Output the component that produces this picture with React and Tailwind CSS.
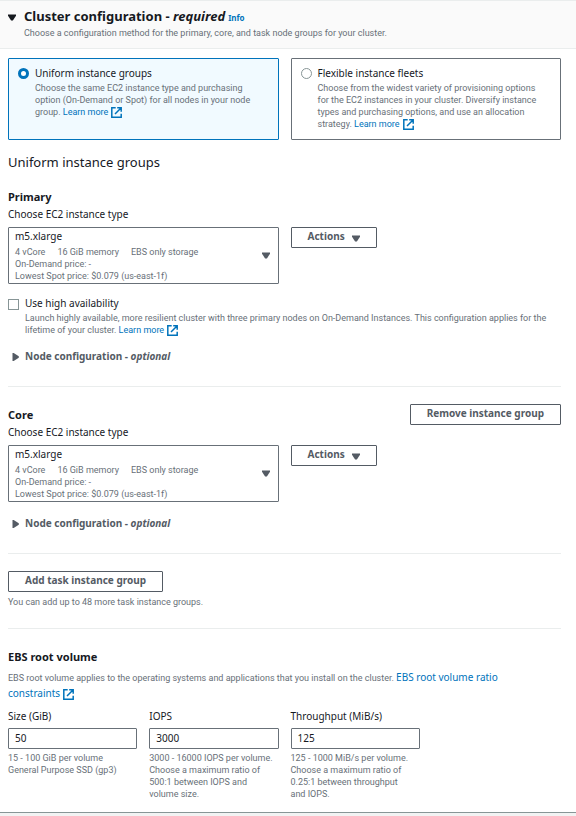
import React, { useState } from "react";

const HELP = "font-[Roboto,sans-serif] text-[9px] leading-[12px] text-[#687078]";
const BODY = "text-[10px] leading-[14px] text-[#16191f]";
const BUTTON =
  "h-[21px] rounded-[1px] border border-[#545b64] bg-white px-4 pb-[2px] text-[10px] leading-[17px] font-bold text-[#545b64]";

function External() {
  return (
    <svg
      viewBox="0 0 11 11"
      className="ml-[3px] inline-block h-[11px] w-[11px] align-[-3px]"
      fill="none"
      stroke="currentColor"
      strokeWidth="1.5"
      aria-hidden="true"
    >
      <path d="M4.7 .8H.8v9.4h9.4V6.8M6.2 .8h4v4M10 1 4 7" />
    </svg>
  );
}

function Down({ className = "" }) {
  return (
    <svg viewBox="0 0 8 7" className={`h-[7px] w-[8px] shrink-0 ${className}`} fill="currentColor" aria-hidden="true">
      <path d="M0 .5h8v1.2L4.9 6.5H3.1L0 1.7z" />
    </svg>
  );
}

function Link({ children }) {
  return (
    <a href="#" className="text-[#0073bb]">
      {children}
      <External />
    </a>
  );
}

function OptionCard({ title, checked, onChange, children }) {
  return (
    <label
      className={`flex min-h-[82px] gap-[6px] rounded-[1px] border pt-[7px] pl-[9px] pr-2 ${
        checked ? "border-[#0073bb] bg-[#f1faff]" : "border-[#687078] bg-white"
      }`}
    >
      <input
        type="radio"
        name="method"
        checked={checked}
        onChange={onChange}
        className="mt-[2px] h-[11px] w-[11px] shrink-0 appearance-none rounded-full border border-[#879596] bg-white checked:border-[3px] checked:border-[#0073bb]"
      />
      <span>
        <span className={`block ${BODY}`}>{title}</span>
        <span className={`mt-[2px] block whitespace-nowrap ${HELP}`}>{children}</span>
      </span>
    </label>
  );
}

function InstanceType({ id }) {
  return (
    <div>
      <label htmlFor={id} className="mt-px block text-[10px] leading-[16px] text-[#16191f]">
        Choose EC2 instance type
      </label>
      <div className="mt-[5px] grid grid-cols-2 items-start gap-3">
        <div className="grid rounded-[1px] border border-[#687078]">
          <select
            id={id}
            className="col-start-1 row-start-1 h-[55px] w-full appearance-none bg-transparent pt-px pb-10 pl-[6px] text-[10px] leading-[14px] text-[#16191f]"
          >
            <option>m5.xlarge</option>
          </select>
          <div className="pointer-events-none col-start-1 row-start-1 flex items-center justify-between pr-2 pl-[6px]">
            <div className={`pt-[18px] pb-px ${HELP}`}>
              <div className="flex gap-3">
                <span>4 vCore</span>
                <span>16 GiB memory</span>
                <span>EBS only storage</span>
              </div>
              <div>On-Demand price: -</div>
              <div>Lowest Spot price: $0.079 (us-east-1f)</div>
            </div>
            <Down className="text-[#545b64]" />
          </div>
        </div>
        <div>
          <button type="button" className={`flex items-center gap-[7px] ${BUTTON}`}>
            Actions
            <Down className="mt-1" />
          </button>
        </div>
      </div>
    </div>
  );
}

function NodeConfiguration({ className }) {
  return (
    <button
      type="button"
      aria-expanded="false"
      className={`flex items-center gap-[6px] pl-1 text-[10px] leading-[14px] font-bold text-[#545b64] ${className}`}
    >
      <svg viewBox="0 0 7 8" className="mt-px h-[8px] w-[7px]" fill="currentColor" aria-hidden="true">
        <path d="M.5 0h1.2L6.8 3.2v1.6L1.7 8H.5z" />
      </svg>
      <span>
        Node configuration - <i>optional</i>
      </span>
    </button>
  );
}

function VolumeField({ id, label, value, lines }) {
  return (
    <div>
      <label htmlFor={id} className={`block ${BODY}`}>
        {label}
      </label>
      <input
        id={id}
        defaultValue={value}
        aria-describedby={`${id}-help`}
        className="mt-[5px] block h-[21px] w-full rounded-[1px] border border-[#687078] bg-white px-[6px] pb-px text-[10px] text-[#16191f]"
      />
      <div id={`${id}-help`} className={`mt-[3px] whitespace-nowrap ${HELP}`}>
        {lines.map((line) => (
          <div key={line}>{line}</div>
        ))}
      </div>
    </div>
  );
}

export default function App() {
  const [method, setMethod] = useState("uniform");
  return (
    <div className="min-h-screen bg-[#f2f3f3] font-['Noto_Sans',sans-serif] text-[#16191f]">
      <section className="border-t border-b border-t-[#eaeded] border-b-[#879596] bg-white pb-3">
        <header className="border-b border-[#eaeded] bg-[#fafafa] pt-[6px] pb-[9px] pl-2">
          <div className="flex items-center">
            <button type="button" aria-expanded="true" className="flex items-center gap-2">
              <Down className="mt-[2px]" />
              <h1 className="text-[13px] leading-[18px] font-bold">
                Cluster configuration - <i>required</i>
              </h1>
            </button>
            <a href="#" className="mt-[3px] ml-[3px] text-[8px] leading-[12px] font-bold text-[#0073bb]">
              Info
            </a>
          </div>
          <p className={`mt-[2px] pl-4 ${HELP}`}>
            Choose a configuration method for the primary, core, and task node groups for your cluster.
          </p>
        </header>

        <div className="pt-[9px] pr-[15px] pl-2">
          <div className="grid grid-cols-2 gap-3">
            <OptionCard
              title="Uniform instance groups"
              checked={method === "uniform"}
              onChange={() => setMethod("uniform")}
            >
              Choose the same EC2 instance type and purchasing
              <br />
              option (On-Demand or Spot) for all nodes in your node
              <br />
              group. <Link>Learn more</Link>
            </OptionCard>
            <OptionCard
              title="Flexible instance fleets"
              checked={method === "fleets"}
              onChange={() => setMethod("fleets")}
            >
              Choose from the widest variety of provisioning options
              <br />
              for the EC2 instances in your cluster. Diversify instance
              <br />
              types and purchasing options, and use an allocation
              <br />
              strategy. <Link>Learn more</Link>
            </OptionCard>
          </div>

          <h2 className="mt-3 text-[13px] leading-[20px]">Uniform instance groups</h2>

          <h3 className="mt-[17px] text-[11px] leading-[16px] font-bold">Primary</h3>
          <InstanceType id="primary-type" />
          <label className="mt-3 flex gap-[6px]">
            <input
              type="checkbox"
              className="mt-[3px] h-[11px] w-[11px] shrink-0 appearance-none border border-[#879596] bg-white checked:bg-[#0073bb]"
            />
            <span>
              <span className={`block ${BODY}`}>Use high availability</span>
              <span className={`mt-[2px] block ${HELP}`}>
                Launch highly available, more resilient cluster with three primary nodes on On-Demand Instances. This
                configuration applies for the
                <br />
                lifetime of your cluster. <Link>Learn more</Link>
              </span>
            </span>
          </label>
          <NodeConfiguration className="mt-[13px]" />

          <hr className="mt-[23px] border-[#eaeded]" />

          <div className="mt-[17px] flex h-[19px] items-start justify-between">
            <h3 className="mt-[3px] text-[11px] leading-[16px] font-bold">Core</h3>
            <button type="button" className={BUTTON}>
              Remove instance group
            </button>
          </div>
          <InstanceType id="core-type" />
          <NodeConfiguration className="mt-[14px]" />

          <hr className="mt-[23px] border-[#eaeded]" />

          <button type="button" className={`mt-[17px] block ${BUTTON}`}>
            Add task instance group
          </button>
          <p className={`mt-1 ${HELP}`}>You can add up to 48 more task instance groups.</p>

          <hr className="mt-5 border-[#eaeded]" />

          <h3 className="mt-5 text-[11px] leading-[16px] font-bold">EBS root volume</h3>
          <p className="mt-[5px] text-[10px] leading-[15px]">
            <span className="font-[Roboto,sans-serif] text-[9px] text-[#687078]">
              EBS root volume applies to the operating systems and applications that you install on the cluster.{" "}
            </span>
            <a href="#" className="text-[#0073bb]">
              EBS root volume ratio
              <br />
              constraints
              <External />
            </a>
          </p>
          <div className="mt-2 grid grid-cols-4 gap-3">
            <VolumeField
              id="size"
              label="Size (GiB)"
              value="50"
              lines={["15 - 100 GiB per volume", "General Purpose SSD (gp3)"]}
            />
            <VolumeField
              id="iops"
              label="IOPS"
              value="3000"
              lines={["3000 - 16000 IOPS per volume.", "Choose a maximum ratio of", "500:1 between IOPS and", "volume size."]}
            />
            <VolumeField
              id="throughput"
              label="Throughput (MiB/s)"
              value="125"
              lines={["125 - 1000 MiB/s per volume.", "Choose a maximum ratio of", "0.25:1 between throughput", "and IOPS."]}
            />
          </div>
        </div>
      </section>
    </div>
  );
}
